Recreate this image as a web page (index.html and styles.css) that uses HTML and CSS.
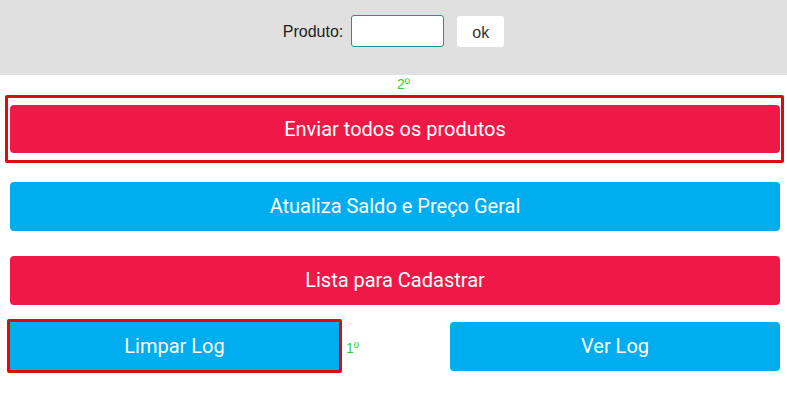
FILE: index.html
```html
<!DOCTYPE html>
<html lang="pt">
<head>
<meta charset="utf-8">
<link rel="stylesheet" href="styles.css">
</head>
<body>
<header class="topbar">
  <label class="lbl" for="produto">Produto:</label>
  <input id="produto" class="field" type="text">
  <button class="ok">ok</button>
</header>
<main class="content">
  <div class="step step-top">2º</div>
  <div class="mark mark-wide">
    <button class="btn red">Enviar todos os produtos</button>
  </div>
  <button class="btn blue gap1">Atualiza Saldo e Preço Geral</button>
  <button class="btn red gap2">Lista para Cadastrar</button>
  <div class="row">
    <div class="mark mark-half">
      <button class="btn blue">Limpar Log</button>
    </div>
    <div class="step step-side">1º</div>
    <button class="btn blue half">Ver Log</button>
  </div>
</main>
</body>
</html>
```
FILE: styles.css
```css
html, body { margin: 0; padding: 0; background: #fff; }
body { font-family: Roboto, "Liberation Sans", Arial, sans-serif; }

.topbar {
  height: 75px;
  background: #e0e0e0;
  display: flex;
  align-items: flex-start;
  justify-content: center;
  padding-top: 15px;
  box-sizing: border-box;
}
.lbl {
  font-family: "Liberation Sans", Arial, sans-serif;
  font-size: 16px;
  color: #222;
  margin-top: 8px;
  margin-right: 8px;
  margin-left: 0;
}
.field {
  width: 93px;
  height: 32px;
  box-sizing: border-box;
  border: 1px solid #2b8b98;
  border-radius: 3px;
  background: #fff;
  margin: 0;
  padding: 0 6px;
}
.ok {
  margin-left: 13px;
  margin-top: 1px;
  width: 47px;
  height: 31px;
  border: none;
  border-radius: 3px;
  background: #fff;
  font-family: "Liberation Sans", Arial, sans-serif;
  font-size: 16px;
  color: #333;
  padding: 0;
  padding-top: 3px;
}

.content {
  display: flex;
  flex-direction: column;
  padding: 0 7px 0 10px;
}
.step {
  color: #2fd52f;
  font-family: "Liberation Sans", Arial, sans-serif;
  font-size: 14px;
  line-height: 15px;
}
.step-top {
  text-align: center;
  height: 20px;
  padding-top: 2px;
  padding-left: 17px;
  box-sizing: border-box;
}
.btn {
  display: flex;
  align-items: center;
  justify-content: center;
  height: 49px;
  border: none;
  border-radius: 4px;
  color: #fff;
  font-family: Roboto, "Liberation Sans", Arial, sans-serif;
  font-size: 20px;
  padding: 0 0 1px;
  width: 100%;
}
.red { background: #ef1948; }
.blue { background: #00adef; }

.mark {
  border: 3px solid #dd0c0c;
  border-radius: 2px;
  box-sizing: border-box;
}
.mark-wide {
  margin: 0 -4px 0 -5px;
  padding: 7px 1px 7px 2px;
}
.mark-wide .btn { height: 48px; }
.gap1 { margin-top: 19px; }
.gap2 { margin-top: 25px; }

.row {
  display: flex;
  align-items: flex-start;
  margin-top: 14px;
}
.mark-half {
  margin-left: -3px;
  width: 335px;
  flex: none;
}
.mark-half .btn { height: 48px; border-radius: 0; }
.step-side {
  margin-left: 4px;
  margin-top: 22px;
  width: 104px;
  flex: none;
}
.half {
  width: 330px;
  flex: none;
  margin-top: 3px;
}
```
